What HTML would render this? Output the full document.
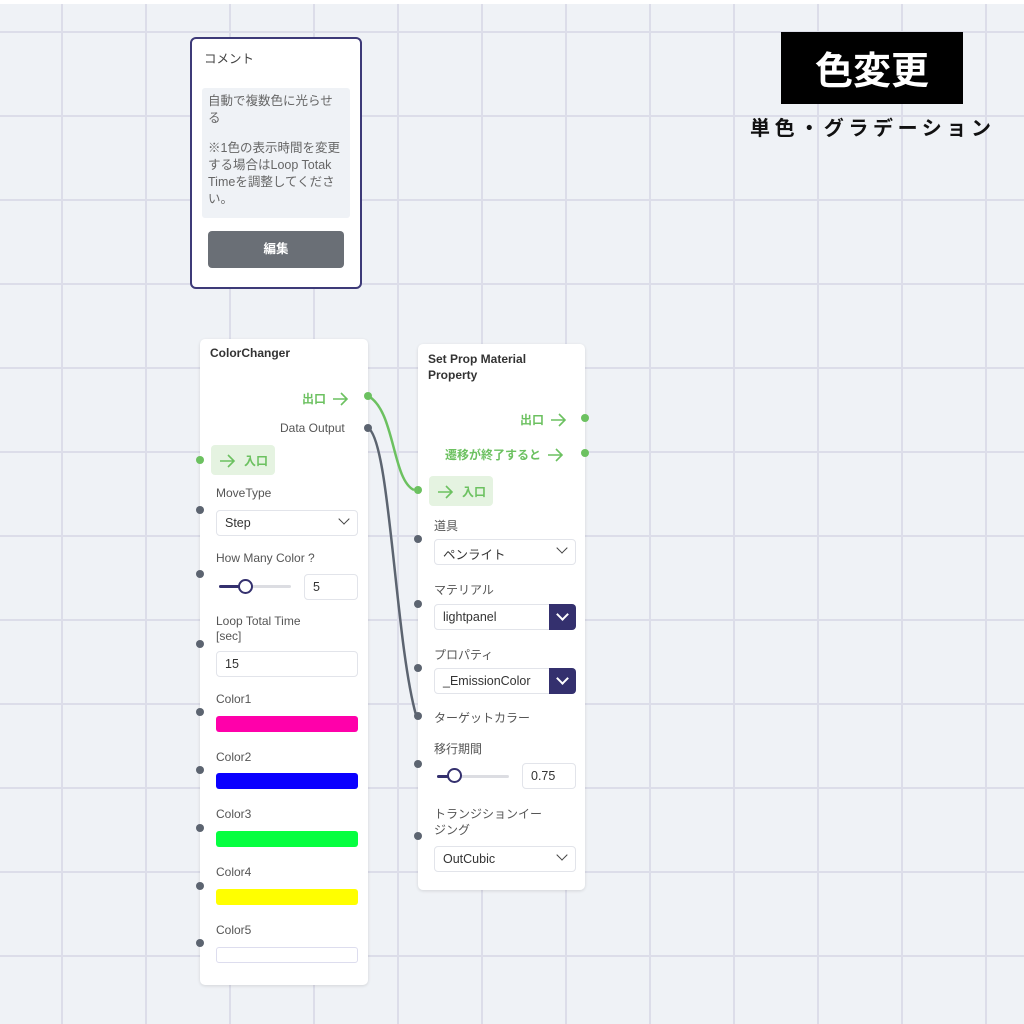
<!DOCTYPE html>
<html><head><meta charset="utf-8"><style>
*{box-sizing:border-box;margin:0;padding:0}
body{width:1024px;height:1024px;overflow:hidden;position:relative;background:#eff2f6;font-family:"Liberation Sans","Noto Sans CJK JP",sans-serif;color:#444}
.grid{position:absolute;left:0;top:4px;width:1024px;height:1020px;
background-image:linear-gradient(to right,transparent 61px,#dcdde9 61px,#dcdde9 63px,transparent 63px),linear-gradient(to bottom,transparent 27px,#dcdde9 27px,#dcdde9 29px,transparent 29px);
background-size:84px 84px,84px 84px;}
.top{position:absolute;left:0;top:0;width:1024px;height:4px;background:#fff}
.a{position:absolute}
.node{position:absolute;background:#fff;border-radius:5px;box-shadow:0 1px 3px rgba(0,0,0,.12)}
.t{position:absolute;font-size:12px;color:#555;white-space:nowrap}
.b{font-weight:bold;color:#333}
.g{color:#6cc160;font-weight:bold}
.ar{display:inline-block;vertical-align:-3px;margin-left:6px}
.dot{position:absolute;width:8px;height:8px;border-radius:50%;background:#5c6470}
.gd{background:#6cc160}
.inp{position:absolute;height:26px;border:1px solid #e2e4ea;border-radius:4px;background:#fff;font-size:12.5px;color:#333;padding:5px 0 0 8px;white-space:nowrap}
.chev{position:absolute;right:9px;top:4px;width:8px;height:8px;border-right:1.6px solid #444;border-bottom:1.6px solid #444;transform:rotate(45deg)}
.dk{position:absolute;right:-1px;top:-1px;width:27px;height:26px;background:#34306e;border-radius:0 4px 4px 0}
.dk:after{content:"";position:absolute;left:9px;top:6px;width:7px;height:7px;border-right:2px solid #fff;border-bottom:2px solid #fff;transform:rotate(45deg)}
.entry{position:absolute;height:30px;background:#e5f3e1;border-radius:4px;font-size:12px;color:#6cc160;font-weight:bold;padding:7px 0 0 8px;white-space:nowrap}
.entry .ar{margin:0 8px 0 0}
.sw{position:absolute;left:16px;width:142px;height:16px;border-radius:3px}
.sl{position:absolute;height:3px;background:#dcdde2;border-radius:2px}
.knob{position:absolute;width:15px;height:15px;border-radius:50%;border:2px solid #34306e;background:#fff}
</style></head><body>
<div class="grid"></div><div class="top"></div>

<!-- comment -->
<div class="a" style="left:190px;top:37px;width:172px;height:252px;background:#fff;border:2px solid #3d3a78;border-radius:6px">
 <div class="t" style="left:12px;top:9px;font-size:12.5px;color:#444">コメント</div>
 <div class="a" style="left:10px;top:49px;width:148px;height:130px;background:#eff2f6;border-radius:3px;font-size:12.5px;line-height:17px;color:#666;padding:5px 8px 0 6px;word-break:break-all">自動で複数色に光らせる<div style="height:13px"></div>※1色の表示時間を変更する場合はLoop Totak Timeを調整してください。</div>
 <div class="a" style="left:16px;top:192px;width:136px;height:37px;background:#6a6f76;border-radius:4px;color:#fff;font-weight:bold;font-size:12.5px;text-align:center;line-height:37px">編集</div>
</div>

<!-- title -->
<div class="a" style="left:781px;top:32px;width:182px;height:72px;background:#000;color:#fff;font-weight:bold;font-size:38px;text-align:center;line-height:72px;font-family:'Noto Sans CJK JP',sans-serif">色変更</div>
<div class="t" style="left:750px;top:112px;font-size:20px;font-weight:bold;color:#111;letter-spacing:4.6px;font-family:'Noto Sans CJK JP',sans-serif">単色・グラデーション</div>

<!-- wires -->
<svg class="a" style="left:0;top:0" width="1024" height="1024">
 <path d="M368 396 C395 410 392 480 414 490" stroke="#6cc160" stroke-width="2.5" fill="none"/>
 <path d="M368 428 C390 440 395 640 416 715" stroke="#5c6470" stroke-width="2.5" fill="none"/>
</svg>

<!-- ColorChanger -->
<div class="node" style="left:200px;top:339px;width:168px;height:646px"></div>
<div class="t b" style="left:210px;top:346px">ColorChanger</div>
<div class="t g" style="left:302px;top:390px">出口<svg class="ar" width="17" height="14" viewBox="0 0 17 14"><path d="M1 7H15M9 1L15 7L9 13" stroke="#6cc160" stroke-width="1.6" fill="none"/></svg></div>
<div class="dot gd" style="left:364px;top:392px"></div>
<div class="t" style="left:280px;top:421px">Data Output</div>
<div class="dot" style="left:364px;top:424px"></div>
<div class="entry" style="left:211px;top:445px;width:64px"><svg class="ar" width="17" height="14" viewBox="0 0 17 14"><path d="M1 7H15M9 1L15 7L9 13" stroke="#6cc160" stroke-width="1.6" fill="none"/></svg>入口</div>
<div class="dot gd" style="left:196px;top:456px"></div>
<div class="t" style="left:216px;top:486px">MoveType</div>
<div class="dot" style="left:196px;top:506px"></div>
<div class="inp" style="left:216px;top:510px;width:142px">Step<span class="chev"></span></div>
<div class="t" style="left:216px;top:551px">How Many Color ?</div>
<div class="dot" style="left:196px;top:570px"></div>
<div class="sl" style="left:219px;top:585px;width:72px"></div>
<div class="sl" style="left:219px;top:585px;width:24px;background:#34306e"></div>
<div class="knob" style="left:238px;top:579px"></div>
<div class="inp" style="left:304px;top:574px;width:54px">5</div>
<div class="t" style="left:216px;top:614px;line-height:15px">Loop Total Time<br>[sec]</div>
<div class="dot" style="left:196px;top:640px"></div>
<div class="inp" style="left:216px;top:651px;width:142px">15</div>
<div class="t" style="left:216px;top:692px">Color1</div><div class="dot" style="left:196px;top:708px"></div>
<div class="sw" style="left:216px;top:716px;background:#ff00aa"></div>
<div class="t" style="left:216px;top:750px">Color2</div><div class="dot" style="left:196px;top:766px"></div>
<div class="sw" style="left:216px;top:773px;background:#0a00ff"></div>
<div class="t" style="left:216px;top:807px">Color3</div><div class="dot" style="left:196px;top:824px"></div>
<div class="sw" style="left:216px;top:831px;background:#05ff40"></div>
<div class="t" style="left:216px;top:865px">Color4</div><div class="dot" style="left:196px;top:882px"></div>
<div class="sw" style="left:216px;top:889px;background:#ffff00"></div>
<div class="t" style="left:216px;top:923px">Color5</div><div class="dot" style="left:196px;top:939px"></div>
<div class="sw" style="left:216px;top:947px;background:#fff;border:1px solid #dde"></div>

<!-- Set Prop -->
<div class="node" style="left:418px;top:344px;width:167px;height:546px"></div>
<div class="t b" style="left:428px;top:351px;line-height:16px">Set Prop Material<br>Property</div>
<div class="t g" style="left:520px;top:411px">出口<svg class="ar" width="17" height="14" viewBox="0 0 17 14"><path d="M1 7H15M9 1L15 7L9 13" stroke="#6cc160" stroke-width="1.6" fill="none"/></svg></div>
<div class="dot gd" style="left:581px;top:414px"></div>
<div class="t g" style="left:445px;top:446px">遷移が終了すると<svg class="ar" width="17" height="14" viewBox="0 0 17 14"><path d="M1 7H15M9 1L15 7L9 13" stroke="#6cc160" stroke-width="1.6" fill="none"/></svg></div>
<div class="dot gd" style="left:581px;top:449px"></div>
<div class="entry" style="left:429px;top:476px;width:64px"><svg class="ar" width="17" height="14" viewBox="0 0 17 14"><path d="M1 7H15M9 1L15 7L9 13" stroke="#6cc160" stroke-width="1.6" fill="none"/></svg>入口</div>
<div class="dot gd" style="left:414px;top:486px"></div>
<div class="t" style="left:434px;top:517px">道具</div>
<div class="dot" style="left:414px;top:535px"></div>
<div class="inp" style="left:434px;top:539px;width:142px;padding-top:4px">ペンライト<span class="chev"></span></div>
<div class="t" style="left:434px;top:581px">マテリアル</div>
<div class="dot" style="left:414px;top:600px"></div>
<div class="inp" style="left:434px;top:604px;width:142px">lightpanel<span class="dk"></span></div>
<div class="t" style="left:434px;top:646px">プロパティ</div>
<div class="dot" style="left:414px;top:664px"></div>
<div class="inp" style="left:434px;top:668px;width:142px">_EmissionColor<span class="dk"></span></div>
<div class="t" style="left:434px;top:709px">ターゲットカラー</div>
<div class="dot" style="left:414px;top:712px"></div>
<div class="t" style="left:434px;top:740px">移行期間</div>
<div class="dot" style="left:414px;top:760px"></div>
<div class="sl" style="left:437px;top:775px;width:72px"></div>
<div class="sl" style="left:437px;top:775px;width:16px;background:#34306e"></div>
<div class="knob" style="left:447px;top:768px"></div>
<div class="inp" style="left:522px;top:763px;width:54px">0.75</div>
<div class="t" style="left:434px;top:806px;line-height:16px">トランジションイー<br>ジング</div>
<div class="dot" style="left:414px;top:832px"></div>
<div class="inp" style="left:434px;top:846px;width:142px">OutCubic<span class="chev"></span></div>
</body></html>
